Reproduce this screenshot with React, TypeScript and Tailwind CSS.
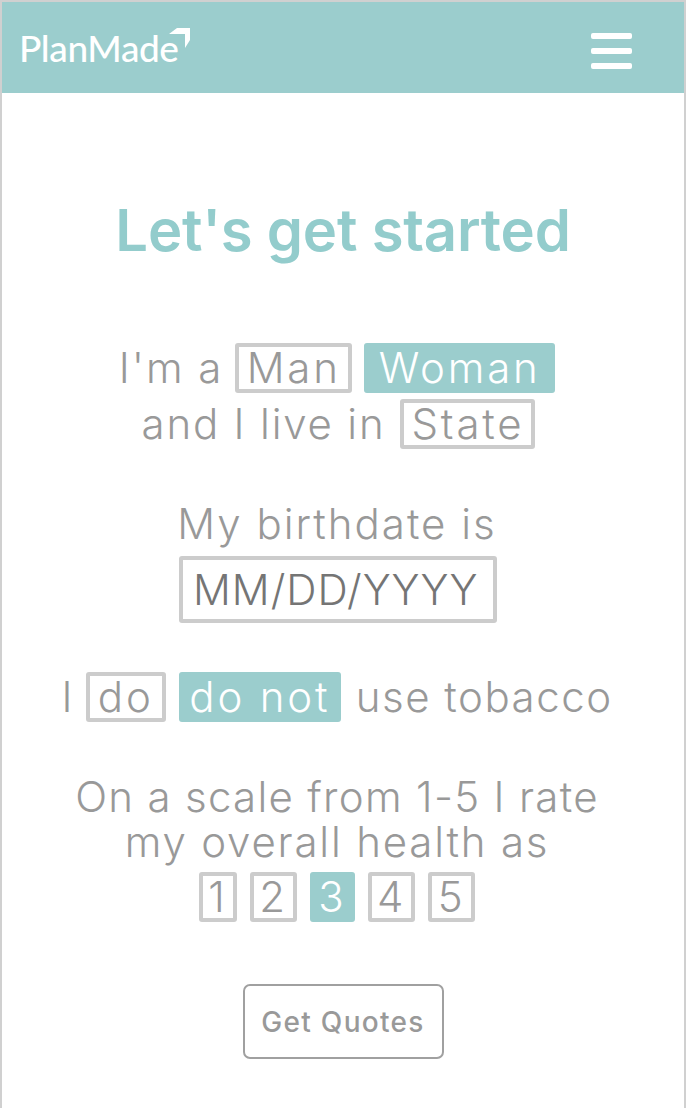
const font = "font-['Inter','Liberation_Sans',sans-serif]";
const line = "text-[42px] font-light leading-none tracking-[1.3px]";

function Tag({ label, active = false, className = "" }: { label: string; active?: boolean; className?: string }) {
  return (
    <span
      className={
        "inline-flex h-[50px] items-center justify-center rounded-[3px] border-[4px] text-[42px] font-light leading-none tracking-[2.8px] " +
        (active ? "border-[#9bcdcd] bg-[#9bcdcd] text-white " : "border-[#cccccc] bg-white text-[#999999] ") +
        className
      }
    >
      {label}
    </span>
  );
}

export default function App() {
  return (
    <div className={font + " h-[1108px] w-[686px] overflow-hidden border-x-2 border-t-2 border-[#d0d0d0] bg-white text-[#999999]"}>
      <header className="flex h-[91px] items-center justify-between bg-[#9bcdcd] pl-[17px] pr-[52px]">
        <div className="relative flex items-center">
          <span className="font-['Lato',sans-serif] text-[37px] font-medium leading-none tracking-[-0.4px] text-white">PlanMade</span>
          <svg className="absolute -right-[12px] -top-[1px]" width="22" height="21" viewBox="0 0 22 21">
            <path d="M8 0H21V12L16 20V6H0Z" fill="#ffffff" />
          </svg>
        </div>
        <div className="mt-[7px] flex w-[41px] flex-col gap-[9px]">
          <div className="h-[6px] rounded-[2px] bg-white" />
          <div className="h-[6px] rounded-[2px] bg-white" />
          <div className="h-[6px] rounded-[2px] bg-white" />
        </div>
      </header>

      <main className="flex flex-col items-center">
        <h1 className="mt-[102px] text-[58px] font-semibold leading-[70px] tracking-[-0.2px] text-[#93cccc]">Let's get started</h1>

        <form className="mt-[78px] flex w-full flex-col items-center pr-[12px]">
          <div className={"flex items-center gap-[12px] " + line}>
            <span className="tracking-[1.9px]">I'm a</span>
            <Tag label="Man" className="w-[117px]" />
            <Tag label="Woman" active className="w-[191px]" />
          </div>
          <div className={"mt-[6px] ml-[3px] flex items-center gap-[15px] " + line}>
            <span className="tracking-[1.8px]">and I live in</span>
            <Tag label="State" className="w-[135px]" />
          </div>

          <p className="mt-[50px] text-[42px] font-light leading-[50px] tracking-[2px]">My birthdate is</p>
          <div className="mt-[7px] ml-[2px] flex h-[67px] w-[318px] items-center rounded-[3px] border-[4px] border-[#cccccc] pl-[10px] text-[42px] font-light tracking-[1px] text-[#757575]">
            MM/DD/YYYY
          </div>

          <div className={"mt-[49px] flex items-center " + line}>
            <span className="mr-[12px]">I</span>
            <Tag label="do" className="mr-[13px] w-[80px]" />
            <Tag label="do not" active className="mr-[15px] w-[162px]" />
            <span className="tracking-[1.5px]">use tobacco</span>
          </div>

          <p className="mt-[52px] text-[42px] font-light leading-[45px] tracking-[1.3px]">On a scale from 1-5 I rate</p>
          <p className="text-[42px] font-light leading-[45px] tracking-[1.8px]">my overall health as</p>
          <div className="mt-[8px] flex gap-[13px]">
            <Tag label="1" className="w-[38px]" />
            <Tag label="2" className="w-[47px]" />
            <Tag label="3" active className="w-[45px]" />
            <Tag label="4" className="w-[47px]" />
            <Tag label="5" className="w-[47px]" />
          </div>
        </form>

        <button className="mt-[62px] flex h-[75px] w-[201px] items-center justify-center rounded-[7px] border-2 border-[#a0a0a0] text-[28px] font-medium tracking-[1.3px] text-[#999999]">
          Get Quotes
        </button>
      </main>
    </div>
  );
}
